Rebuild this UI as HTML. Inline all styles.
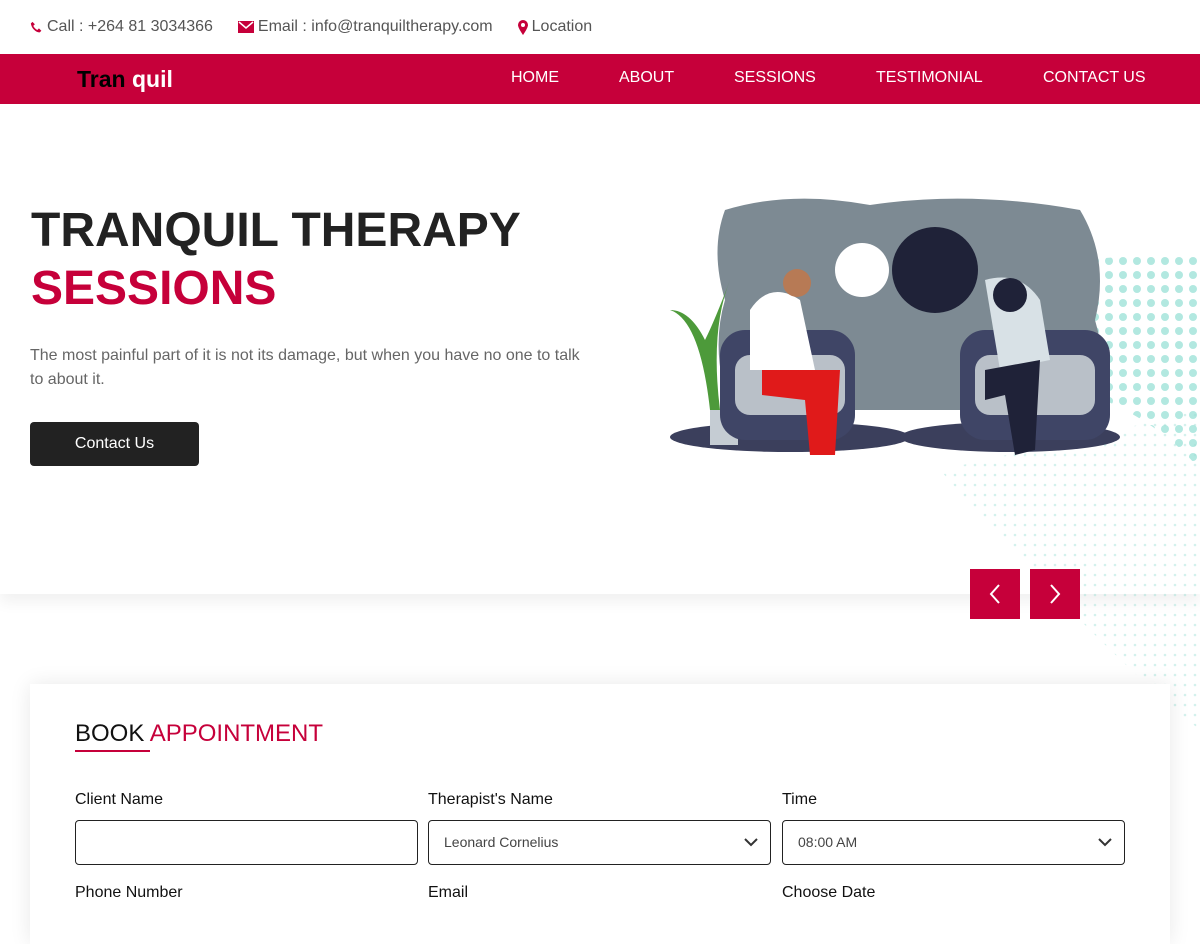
<!DOCTYPE html>
<html><head><meta charset="utf-8"><style>
*{margin:0;padding:0;box-sizing:border-box}
body{width:1200px;height:900px;overflow:hidden;background:#fff;font-family:"Liberation Sans",Arial,sans-serif;position:relative}
.top{height:54px;display:flex;align-items:center;padding-left:30px;font-size:16px;color:#555}
.top span{display:flex;align-items:center;margin-right:25px}
.top svg{margin-right:4px}
nav{position:absolute;top:54px;left:0;width:1200px;height:50px;background:#c6003a}
.logo{position:absolute;left:77px;top:12px;font-size:23px;font-weight:bold;color:#000}
.logo b{color:#fff}
.menu a{position:absolute;top:15px;color:#fff;font-size:16px;text-decoration:none}
.hero{position:absolute;top:104px;left:0;width:1200px;height:490px;box-shadow:0 8px 14px rgba(0,0,0,.06)}
h1{position:absolute;left:31px;top:98px;font-size:48px;line-height:58px;color:#222;font-weight:bold}
h1 span{color:#c6003a}
.p{position:absolute;left:30px;top:240px;width:560px;font-size:16px;line-height:24px;color:#666}
.btn{position:absolute;left:30px;top:318px;width:169px;height:44px;background:#222;color:#fff;border-radius:4px;font-size:16px;text-align:center;line-height:44px}
.arr{position:absolute;top:569px;width:50px;height:50px;background:#c6003a;display:flex;align-items:center;justify-content:center}
.card{position:absolute;left:30px;top:684px;width:1140px;height:260px;background:#fff;box-shadow:0 0 20px rgba(0,0,0,.09)}
.card h2{position:absolute;left:45px;top:36px;font-size:24px;font-weight:normal;color:#111}
.card h2 span{color:#c6003a}
.ul{position:absolute;left:45px;top:66px;width:75px;height:2px;background:#c6003a}
.lbl{position:absolute;font-size:16px;color:#111}
.in{position:absolute;width:343px;height:45px;border:1px solid #222;border-radius:4px;font-size:14px;color:#444;padding:13px 15px}
.in svg{position:absolute;right:12px;top:17px}
</style></head><body>
<div class="top">
<span><svg width="13" height="13" viewBox="0 0 16 16"><path d="M3 1l3 3-2 2c1 2 3 4 5 5l2-2 3 3-2 2C7 14 2 9 1 3z" fill="#c6003a"/></svg>Call : +264 81 3034366</span>
<span><svg width="16" height="12" viewBox="0 0 16 12"><rect width="16" height="12" fill="#c6003a"/><path d="M1 1l7 6 7-6" stroke="#fff" stroke-width="1.5" fill="none"/></svg>Email : info@tranquiltherapy.com</span>
<span><svg width="10" height="15" viewBox="0 0 10 15"><path d="M5 0a5 5 0 0 1 5 5c0 3-5 10-5 10S0 8 0 5a5 5 0 0 1 5-5z" fill="#c6003a"/><circle cx="5" cy="5" r="2" fill="#fff"/></svg>Location</span>
</div>
<nav><div class="logo">Tran <b>quil</b></div>
<div class="menu"><a style="left:511px">HOME</a><a style="left:619px">ABOUT</a><a style="left:734px">SESSIONS</a><a style="left:876px">TESTIMONIAL</a><a style="left:1043px">CONTACT US</a></div></nav>
<div class="hero">
<h1>TRANQUIL THERAPY<br><span>SESSIONS</span></h1>
<div class="p">The most painful part of it is not its damage, but when you have no one to talk to about it.</div>
<div class="btn">Contact Us</div>
</div>
<svg style="position:absolute;left:640px;top:170px" width="560" height="560" viewBox="0 0 560 560">
<defs><pattern id="d" width="14" height="14" patternUnits="userSpaceOnUse"><circle cx="7" cy="7" r="4" fill="#7fd8cc"/></pattern>
<pattern id="d2" width="10" height="10" patternUnits="userSpaceOnUse"><circle cx="5" cy="5" r="1.3" fill="#9fe0d6"/></pattern></defs>
<path d="M440 90 Q560 80 560 90 L560 300 Q520 250 440 220Z" fill="url(#d)" opacity=".6"/>
<path d="M300 300 Q480 260 560 240 L560 560 Q460 480 300 300Z" fill="url(#d2)" opacity=".45"/>
<path d="M85 40 Q150 20 230 35 Q330 20 440 40 Q470 90 455 150 Q470 200 450 240 L90 240 Q70 180 85 130 Q70 80 85 40Z" fill="#7d8a93"/>
<ellipse cx="150" cy="267" rx="120" ry="15" fill="#3b3f5c"/><ellipse cx="370" cy="267" rx="110" ry="15" fill="#3b3f5c"/>
<circle cx="295" cy="100" r="43" fill="#1f2238"/><circle cx="222" cy="100" r="27" fill="#fff"/>
<path d="M30 140 Q60 150 70 240 L80 240 Q70 160 90 110 Q75 150 65 170 Q50 140 30 140Z" fill="#4d9a3a"/>
<rect x="70" y="240" width="28" height="35" fill="#c5ccd3"/>
<rect x="80" y="160" width="135" height="110" rx="25" fill="#3f4566"/><rect x="95" y="185" width="110" height="60" rx="15" fill="#b9c0c8"/>
<rect x="320" y="160" width="150" height="110" rx="25" fill="#3f4566"/><rect x="335" y="185" width="120" height="60" rx="15" fill="#b9c0c8"/>
<path d="M110 140 Q130 110 160 130 L175 200 L110 200Z" fill="#fff"/>
<path d="M122 200 L200 200 L195 285 L170 285 L165 230 L122 225Z" fill="#e01a1a"/>
<circle cx="157" cy="113" r="14" fill="#b77a55"/>
<path d="M345 110 Q380 100 400 130 L410 190 L360 200Z" fill="#d8e1e6"/>
<path d="M345 200 L400 190 L395 280 L375 285 L365 225 L345 230Z" fill="#1f2238"/>
<circle cx="370" cy="125" r="17" fill="#1f2238"/>
</svg>
<div class="arr" style="left:970px"><svg width="14" height="22" viewBox="0 0 14 22"><path d="M11 2L3 11l8 9" stroke="#fff" stroke-width="2" fill="none"/></svg></div>
<div class="arr" style="left:1030px"><svg width="14" height="22" viewBox="0 0 14 22"><path d="M3 2l8 9-8 9" stroke="#fff" stroke-width="2" fill="none"/></svg></div>
<div class="card">
<h2>BOOK <span>APPOINTMENT</span></h2><div class="ul"></div>
<div class="lbl" style="left:45px;top:107px">Client Name</div>
<div class="lbl" style="left:398px;top:107px">Therapist's Name</div>
<div class="lbl" style="left:752px;top:107px">Time</div>
<div class="in" style="left:45px;top:136px"></div>
<div class="in" style="left:398px;top:136px">Leonard Cornelius<svg width="14" height="9" viewBox="0 0 14 9"><path d="M1 1l6 6 6-6" stroke="#333" stroke-width="2" fill="none"/></svg></div>
<div class="in" style="left:752px;top:136px">08:00 AM<svg width="14" height="9" viewBox="0 0 14 9"><path d="M1 1l6 6 6-6" stroke="#333" stroke-width="2" fill="none"/></svg></div>
<div class="lbl" style="left:45px;top:200px">Phone Number</div>
<div class="lbl" style="left:398px;top:200px">Email</div>
<div class="lbl" style="left:752px;top:200px">Choose Date</div>
</div>
</body></html>
